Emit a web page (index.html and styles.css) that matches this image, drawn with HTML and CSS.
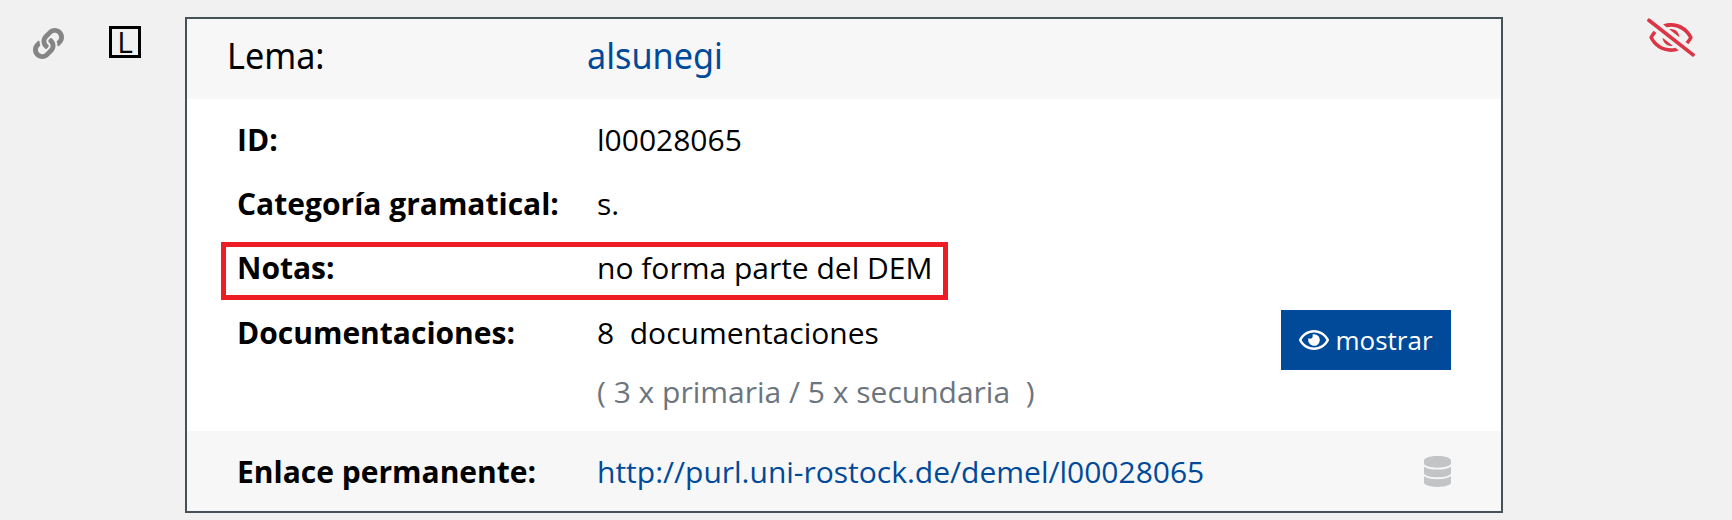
FILE: index.html
```html
<!DOCTYPE html>
<html lang="es">
<head>
<meta charset="utf-8">
<title>alsunegi</title>
<link rel="stylesheet" href="styles.css">
</head>
<body>
<main class="page">
  <div class="tools">
    <svg class="icon-link" viewBox="0 0 512 512"><path d="M326.612 185.391c59.747 59.809 58.927 155.698.36 214.59-.11.12-.24.25-.36.37l-67.2 67.2c-59.27 59.27-155.699 59.262-214.96 0-59.27-59.26-59.27-155.7 0-214.96l37.106-37.106c9.84-9.84 26.786-3.3 27.294 10.606.648 17.722 3.826 35.527 9.69 52.721 1.986 5.822.567 12.262-3.783 16.612l-13.087 13.087c-28.026 28.026-28.905 73.66-1.155 101.96 28.024 28.579 74.086 28.749 102.325.51l67.2-67.19c28.191-28.191 28.073-73.757 0-101.83-3.701-3.694-7.429-6.564-10.341-8.569a16.037 16.037 0 0 1-6.947-12.606c-.396-10.567 3.348-21.456 11.698-29.806l21.054-21.055c5.521-5.521 14.182-6.199 20.584-1.731a152.482 152.482 0 0 1 20.522 17.197zM467.547 44.449c-59.261-59.262-155.69-59.27-214.96 0l-67.2 67.2c-.12.12-.25.25-.36.37-58.566 58.892-59.387 154.781.36 214.59a152.454 152.454 0 0 0 20.521 17.196c6.402 4.468 15.064 3.789 20.584-1.731l21.054-21.055c8.35-8.35 12.094-19.239 11.698-29.806a16.037 16.037 0 0 0-6.947-12.606c-2.912-2.005-6.64-4.875-10.341-8.569-28.073-28.073-28.191-73.639 0-101.83l67.2-67.19c28.239-28.239 74.3-28.069 102.325.51 27.75 28.3 26.872 73.934-1.155 101.96l-13.087 13.087c-4.35 4.35-5.769 10.79-3.783 16.612 5.864 17.194 9.042 34.999 9.69 52.721.509 13.906 17.454 20.446 27.294 10.606l37.106-37.106c59.271-59.259 59.271-155.699.001-214.959z"/></svg>
    <span class="lemma-mark">L</span>
  </div>
  <article class="card">
    <header class="card-head">
      <span class="head-label">Lema:</span>
      <a class="head-value">alsunegi</a>
    </header>
    <div class="card-body">
      <div class="row"><span class="label">ID:</span><span>l00028065</span></div>
      <div class="row"><span class="label">Categoría gramatical:</span><span>s.</span></div>
      <div class="row marked"><span class="label">Notas:</span><span>no forma parte del DEM</span></div>
      <div class="row docs">
        <span class="label">Documentaciones:</span>
        <div class="doc-info">
          <span>8&nbsp; documentaciones</span>
          <span class="muted">( 3 x primaria / 5 x secundaria&nbsp; )</span>
        </div>
        <button class="show" type="button">
          <svg class="icon-eye" viewBox="0 64 576 384"><path d="M288 144a110.94 110.94 0 0 0-31.24 5 55.4 55.4 0 0 1 7.24 27 56 56 0 0 1-56 56 55.4 55.4 0 0 1-27-7.24A111.71 111.71 0 1 0 288 144zm284.52 97.4C518.29 135.59 410.93 64 288 64S57.68 135.64 3.48 241.41a32.35 32.35 0 0 0 0 29.19C57.71 376.41 165.07 448 288 448s230.32-71.64 284.52-177.41a32.35 32.35 0 0 0 0-29.19zM288 400c-98.65 0-189.09-55-237.93-144C98.91 167 189.34 112 288 112s189.09 55 237.93 144C477.1 345 386.66 400 288 400z"/></svg>
          <span>mostrar</span>
        </button>
      </div>
    </div>
    <footer class="card-foot row">
      <span class="label">Enlace permanente:</span>
      <a class="permalink">http://purl.uni-rostock.de/demel/l00028065</a>
      <svg class="icon-db" viewBox="0 0 448 512"><path d="M448 73.143v45.714C448 159.143 347.667 192 224 192S0 159.143 0 118.857V73.143C0 32.857 100.333 0 224 0s224 32.857 224 73.143zM448 176v102.857C448 319.143 347.667 352 224 352S0 319.143 0 278.857V176c48.125 33.143 136.208 48.572 224 48.572S399.874 209.143 448 176zm0 160v102.857C448 479.143 347.667 512 224 512S0 479.143 0 438.857V336c48.125 33.143 136.208 48.572 224 48.572S399.874 369.143 448 336z"/></svg>
    </footer>
  </article>
  <div class="hidden-flag">
    <svg class="icon-slash" viewBox="0 0 640 512"><path d="M634 471L36 3.51A16 16 0 0 0 13.51 6l-10 12.49A16 16 0 0 0 6 41l598 467.49a16 16 0 0 0 22.49-2.49l10-12.49A16 16 0 0 0 634 471zM296.79 146.47l134.79 105.38C429.36 191.91 380.48 144 320 144a112.26 112.26 0 0 0-23.21 2.47zm46.42 219.07L208.42 260.16C210.65 320.09 259.53 368 320 368a113 113 0 0 0 23.21-2.46zM320 112c98.65 0 189.09 55 237.93 144a285.53 285.53 0 0 1-44 60.2l37.74 29.5a333.7 333.7 0 0 0 52.9-75.11 32.35 32.35 0 0 0 0-29.19C550.29 135.59 442.93 64 320 64c-36.7 0-71.71 7-104.63 18.81l46.41 36.29c18.94-4.3 38.34-7.1 58.22-7.1zm0 288c-98.65 0-189.08-55-237.93-144a285.47 285.47 0 0 1 44.05-60.19l-37.74-29.5a333.6 333.6 0 0 0-52.89 75.1 32.35 32.35 0 0 0 0 29.19C89.72 376.41 197.08 448 320 448c36.7 0 71.71-7.05 104.63-18.81l-46.41-36.28C359.28 397.2 339.89 400 320 400z"/></svg>
  </div>
</main>
</body>
</html>
```
FILE: styles.css
```css
*, *::after { box-sizing: border-box; }
body {
  margin: 0;
  background: #f1f1f1;
  color: #000;
  font: 30px/45px "Open Sans", "Noto Sans", sans-serif;
}
svg { display: block; fill: currentColor; flex: none; }
.page {
  display: grid;
  grid-template-columns: 185px 1318px 1fr;
  height: 520px;
  padding-top: 17px;
  align-items: start;
  overflow: hidden;
}
.tools { display: flex; gap: 45px; padding: 9px 0 0 33px; }
.icon-link { width: 31px; height: 31px; margin-top: 2px; color: #858585; }
.lemma-mark {
  width: 32px;
  height: 32px;
  border: 3px solid #000;
  font-size: 30px;
  line-height: 25px;
  text-align: center;
}
.card { height: 496px; border: 2px solid #465356; background: #fff; }
.card-head {
  display: flex;
  height: 80px;
  padding: 10px 0 0 40px;
  background: #f7f7f7;
  font: 36px/54px "Noto Sans", sans-serif;
}
.head-label { width: 360px; }
.head-value, .permalink { color: #004a99; }
.head-label, .head-value { transform: scaleX(0.95); transform-origin: left; }
.card-body { height: 332px; padding-top: 18px; }
.row { display: flex; padding-left: 50px; height: 64px; position: relative; white-space: nowrap; }
.label { width: 360px; flex: none; font-weight: 700; }
.marked { height: 65px; }
.marked::after {
  content: "";
  position: absolute;
  left: 34px;
  top: -3px;
  width: 727px;
  height: 58px;
  border: 5px solid #ee1c24;
}
.docs { height: auto; padding-right: 50px; }
.doc-info { display: flex; flex-direction: column; gap: 14px; flex: 1; }
.muted { color: #6c757d; }
.show {
  display: flex;
  align-items: center;
  gap: 7px;
  width: 170px;
  height: 60px;
  padding: 0 0 0 17.5px;
  border: 0;
  background: #004a99;
  color: #fff;
  font: 26px/40px "Open Sans", sans-serif;
}
.icon-eye { width: 30px; height: 20px; }
.card-foot { height: 80px; padding: 18px 50px 0 50px; background: #f7f7f7; }
.permalink { flex: 1; }
.icon-db { width: 27px; height: 31px; margin-top: 7px; color: #c3c4c6; }
.hidden-flag { padding: 1px 0 0 144px; color: #dc3545; }
.icon-slash { width: 48px; height: 39px; }
```
